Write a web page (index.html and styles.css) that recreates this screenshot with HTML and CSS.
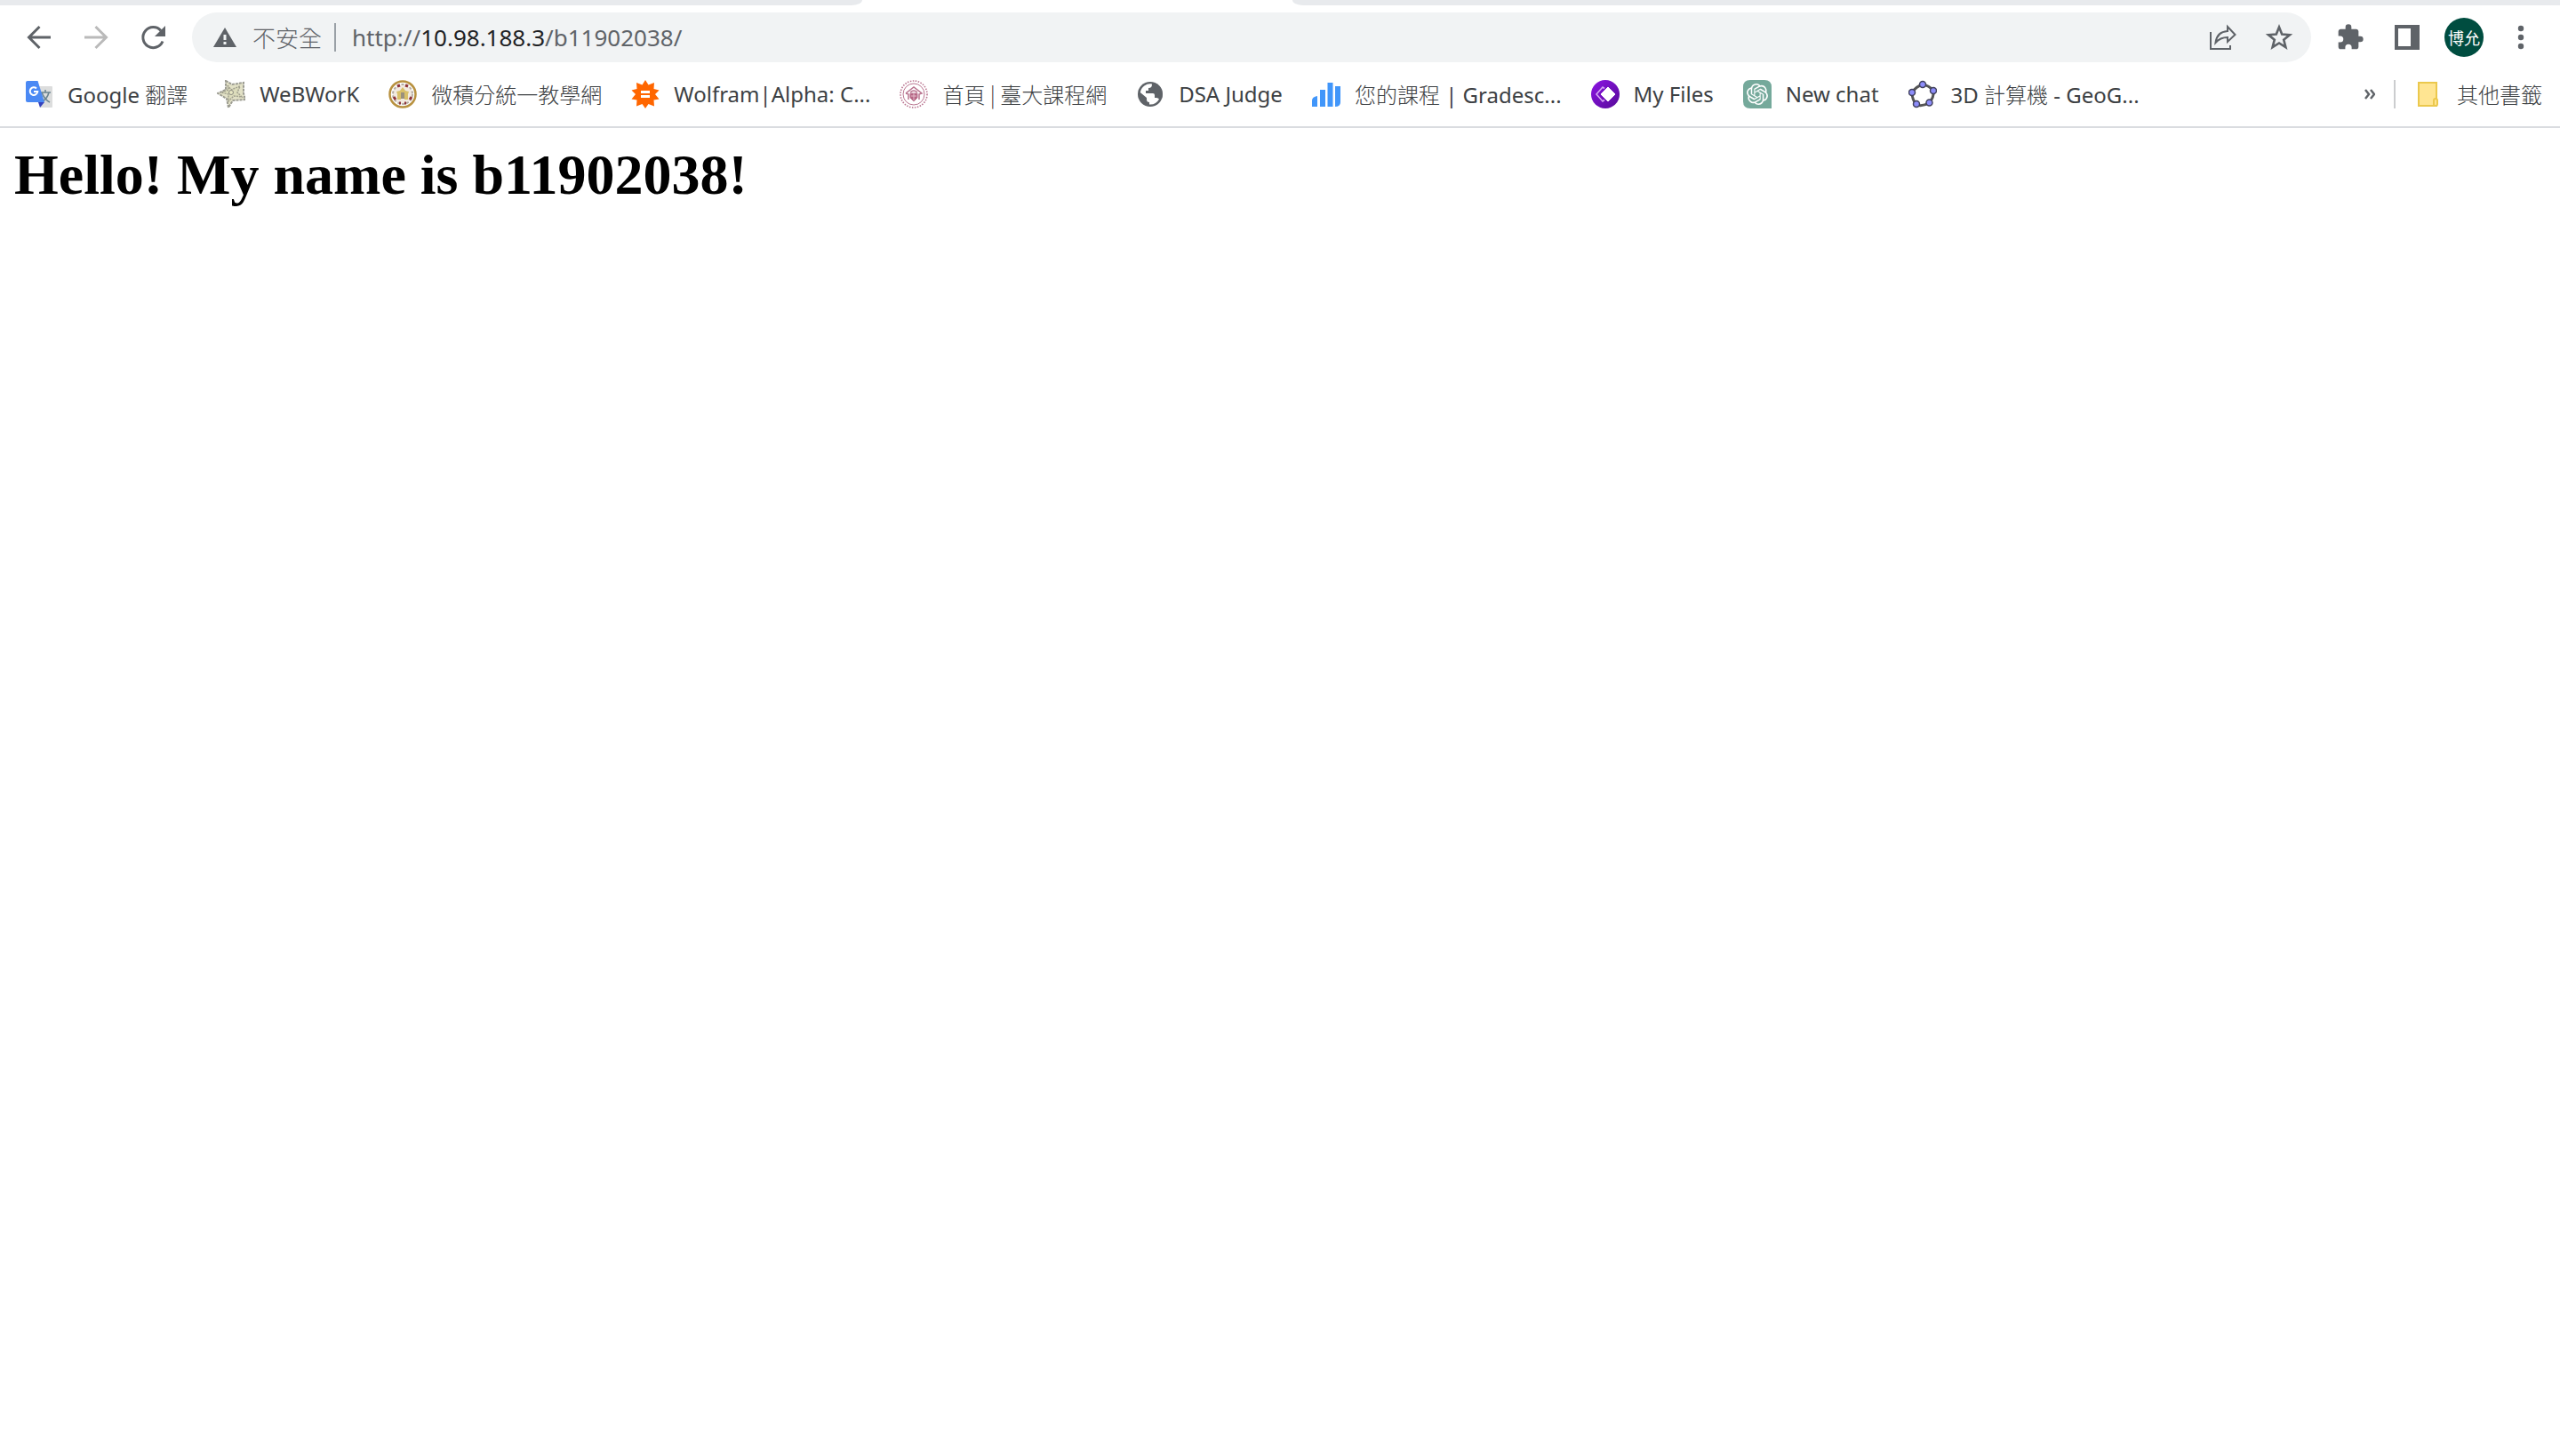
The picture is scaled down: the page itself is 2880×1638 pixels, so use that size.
FILE: index.html
```html
<!DOCTYPE html>
<html lang="zh-Hant">
<head>
<meta charset="utf-8">
<title>b11902038</title>
<link rel="stylesheet" href="styles.css">
</head>
<body>
<header class="browser">
  <div class="tabs"><div class="tabs-before"></div><div class="tabs-active"></div><div class="tabs-after"></div></div>

  <div class="toolbar">
    <button class="tool" aria-label="Back"><svg class="icon" viewBox="0 0 32 32"><path d="M29 16H4M16.500 4 4.500 16l12 12" fill="none" stroke="currentColor" stroke-width="3"/></svg></button>
    <button class="tool" aria-label="Forward" disabled><svg class="icon" viewBox="0 0 32 32"><path d="M3 16h25M15.500 4l12 12-12 12" fill="none" stroke="currentColor" stroke-width="3"/></svg></button>
    <button class="tool" aria-label="Reload"><svg class="icon" viewBox="0 0 32 32"><path d="M27 20.500A11.500 11.500 0 1 1 25 8.500" fill="none" stroke="currentColor" stroke-width="3"/><path d="M30 3v12H18z" fill="currentColor"/></svg></button>

    <div class="omnibox">
      <svg class="warning" viewBox="0 0 26 22"><path d="M13 0 26 22H0z" fill="#5f6368"/><path d="M11.500 8h3v6h-3zM11.500 16h3v3h-3z" fill="#f1f3f4"/></svg>
      <span class="cjk security">不安全</span>
      <span class="url-divider"></span>
      <div class="url" role="textbox" aria-label="Address" contenteditable="true" spellcheck="false">http://<span class="host">10.98.188.3</span>/b11902038/</div>
      <button class="tool" aria-label="Share"><svg class="icon" viewBox="0 0 32 32" fill="none" stroke="currentColor" stroke-width="2"><path d="M3 10v19h22v-4"/><path d="M22 4l8.500 9L22 21v-5c-6 0-10 2-13.500 6C9.500 14 14 9.500 22 9z"/></svg></button>
      <button class="tool" aria-label="Bookmark this page"><svg class="icon" viewBox="0 0 32 32"><path d="M16 4.500l3.200 8.100 8.700.6-6.700 5.500 2.200 8.500L16 22.500l-7.400 4.700 2.200-8.500-6.700-5.500 8.700-.6z" fill="none" stroke="currentColor" stroke-width="2.600"/></svg></button>
    </div>

    <button class="tool" aria-label="Extensions"><svg class="icon" viewBox="0 0 24 24"><path d="M20.500 11H19V7c0-1.100-.9-2-2-2h-4V3.500a2.500 2.500 0 0 0-5 0V5H4c-1.100 0-2 .9-2 2v3.800h1.500a2.700 2.700 0 0 1 0 5.400H2V20c0 1.100.9 2 2 2h3.800v-1.500a2.700 2.700 0 0 1 5.400 0V22H17c1.100 0 2-.9 2-2v-4h1.500a2.500 2.500 0 0 0 0-5z" fill="currentColor"/></svg></button>
    <button class="tool" aria-label="Side panel"><svg class="icon" viewBox="0 0 32 32"><path d="M2 2h28v28H2zM6 6v20h14V6z" fill="currentColor" fill-rule="evenodd"/></svg></button>
    <button class="tool" aria-label="Profile"><span class="avatar">博允</span></button>
    <button class="tool" aria-label="Menu"><svg class="icon" viewBox="0 0 32 32" fill="currentColor"><circle cx="16" cy="6" r="3.200"/><circle cx="16" cy="16" r="3.200"/><circle cx="16" cy="26" r="3.200"/></svg></button>
  </div>

  <nav class="bookmarks">
    <a class="bookmark" href="#"><svg class="icon" viewBox="0 0 32 32"><path d="M12 7h18q1 0 1 1v22q0 1-1 1H17z" fill="#dcdddd"/><path d="M17 14h12M23 11v3M19 14q3 8 9 11M27 14q-2 8-9 11" fill="none" stroke="#6a8490" stroke-width="1.600"/><path d="M15 25h7l-5 6z" fill="#3442bd"/><path d="M3 1h11.500L22 25H3q-2 0-2-2V3q0-2 2-2z" fill="#4a89f4"/><path d="M13 9.500A4.300 4.300 0 1 0 14.300 13H10" fill="none" stroke="#fff" stroke-width="2"/></svg><span>Google <span class="cjk">翻譯</span></span></a>
    <a class="bookmark" href="#"><svg class="icon" viewBox="0 0 32 32"><path d="M10 1l7 4 13-2v12l2 7-14 1-5 8-2-10L1 15l9-4z" fill="#e2e1c6" stroke="#9c9c92" stroke-width="2" stroke-dasharray="3 1"/><path d="M12 6l4 5 10-4-3 7 5 5-9-1-6 6v-8l-8-2 8-3z" fill="#dcdcbb" stroke="#a09f8e" stroke-width="1.500" stroke-dasharray="2 1"/><circle cx="16" cy="14" r="2.500" fill="#e9e8c4" stroke="#8b8b80"/></svg><span>WeBWorK</span></a>
    <a class="bookmark" href="#"><svg class="icon" viewBox="0 0 32 32"><circle cx="16" cy="16" r="14.500" fill="#fff" stroke="#b8913f" stroke-width="2.500"/><circle cx="16" cy="16" r="11" fill="#f2eae0" stroke="#b5aca3" stroke-width="2" stroke-dasharray="3 2"/><path d="M10 7l3-1M22 7l-3-1M6 19l2 3M26 19l-2 3M12 26h2M18 26h2" stroke="#8e333a" stroke-width="3"/><path d="M9 13l4-1 3-4 3 4 4 1-1 3v6h-4v-5h-4v5h-4v-6z" fill="#d9c069"/><path d="M14 14h4v7h-4z" fill="#9a907c"/></svg><span class="cjk">微積分統一教學網</span></a>
    <a class="bookmark" href="#"><svg class="icon" viewBox="0 0 32 32"><path d="M16 0l3.500 5.500L26 3l-.5 7 6 1.500L27 16l4.500 5.500-6 1 .5 7-6.500-2.500L16 32l-3.500-5L6 29.500l.5-7-6-1L5 16 .5 11.500l6-1.500L6 3l6.500 2.500z" fill="#f60"/><path d="M11 12h10v3H11zM11 17h10v3H11z" fill="#fff"/></svg><span>Wolfram|Alpha: C...</span></a>
    <a class="bookmark" href="#"><svg class="icon" viewBox="0 0 32 32" fill="none" stroke="#b9748f"><circle cx="16" cy="16" r="15" stroke-width="1.600" stroke-dasharray="1.500 1.500"/><circle cx="16" cy="16" r="12" stroke-width="1"/><path d="M7 15l9-7 9 7-3 1v6M10 22v-6l-3-1M12 14q4-4 8 0" stroke-width="1.500"/><path d="M12 15h8v5l-4 4-4-4z" fill="#b66685"/><path d="M13 18h6M16 15v8" stroke="#e4bdcb"/></svg><span class="cjk">首頁 | 臺大課程網</span></a>
    <a class="bookmark" href="#"><svg class="icon" viewBox="0 0 32 32"><circle cx="16" cy="16" r="14" fill="#5f6368"/><path d="M18 4.500c0 3-1 4.500-4 4.500v3h-3v3h8q2 0 2 2v3h2q2 0 3 1.500A11.500 11.500 0 0 1 15 27.500V25q-3 0-3-3v-2L4.800 14A11.500 11.500 0 0 1 18 4.500z" fill="#fff"/><path d="M21 3.500v5q0 3-4 3v3h3q4 0 4 4 3 0 5 2.500Q32 8 21 3.500z" fill="#5f6368"/></svg><span>DSA Judge</span></a>
    <a class="bookmark" href="#"><svg class="icon" viewBox="0 0 32 32" fill="#4196fa"><path d="M0 30v-7q0-4 6-5v12zM9 11h6v19H9zM17.500 3h6v27h-6zM26 7h6v18q0 5-6 5z"/></svg><span><span class="cjk">您的課程</span> | Gradesc...</span></a>
    <a class="bookmark" href="#"><svg class="icon" viewBox="0 0 32 32"><defs><linearGradient id="violet" x2="1" y2="1"><stop stop-color="#8c14e4"/><stop offset="1" stop-color="#570b98"/></linearGradient></defs><circle cx="16" cy="16" r="16" fill="url(#violet)"/><path d="M15 9.500l-2-1.500-7 8 7 8 2-1.500" fill="none" stroke="#d7a7f4" stroke-width="1.600"/><path d="M19 8l8 8-8 8-8-8z" fill="#fff" stroke="#fff" stroke-linejoin="round"/></svg><span>My Files</span></a>
    <a class="bookmark" href="#"><svg class="icon" viewBox="0 0 32 32"><path d="M8 0h16q8 0 8 8v24H8q-8 0-8-8V8q0-8 8-8z" fill="#75a99b"/><g transform="translate(4 4)" fill="#fff"><path d="M22.282 9.821a5.985 5.985 0 0 0-.516-4.911 6.046 6.046 0 0 0-6.510-2.900A6.065 6.065 0 0 0 4.981 4.182a5.985 5.985 0 0 0-3.998 2.900 6.046 6.046 0 0 0 .743 7.097 5.980 5.980 0 0 0 .511 4.911 6.051 6.051 0 0 0 6.515 2.900A5.985 5.985 0 0 0 13.260 24a6.056 6.056 0 0 0 5.772-4.206 5.990 5.990 0 0 0 3.998-2.900 6.056 6.056 0 0 0-.748-7.073zM13.260 22.430a4.476 4.476 0 0 1-2.876-1.041l.141-.080 4.779-2.758a.795.795 0 0 0 .392-.681v-6.737l2.020 1.169a.071.071 0 0 1 .038.052v5.583a4.504 4.504 0 0 1-4.494 4.493zM3.600 18.304a4.471 4.471 0 0 1-.535-3.014l.142.085 4.783 2.758a.771.771 0 0 0 .781 0l5.843-3.368v2.332a.080.080 0 0 1-.033.062L9.740 19.950a4.500 4.500 0 0 1-6.140-1.646zM2.341 7.896a4.485 4.485 0 0 1 2.365-1.973v5.677a.766.766 0 0 0 .388.676l5.814 3.355-2.020 1.168a.076.076 0 0 1-.071 0l-4.830-2.786A4.504 4.504 0 0 1 2.341 7.872zm16.597 3.855l-5.833-3.387L15.119 7.200a.076.076 0 0 1 .071 0l4.830 2.791a4.494 4.494 0 0 1-.677 8.105v-5.678a.790.790 0 0 0-.405-.667zm2.011-3.023l-.142-.085-4.774-2.782a.776.776 0 0 0-.785 0L9.409 9.230V6.897a.066.066 0 0 1 .028-.061l4.830-2.787a4.499 4.499 0 0 1 6.681 4.660zM8.307 12.863l-2.020-1.164a.080.080 0 0 1-.038-.057V6.075a4.499 4.499 0 0 1 7.376-3.454l-.142.081L8.704 5.460a.795.795 0 0 0-.392.681zm1.097-2.365l2.602-1.500 2.607 1.500v2.999l-2.597 1.500-2.607-1.500z"/></g></svg><span>New chat</span></a>
    <a class="bookmark" href="#"><svg class="icon" viewBox="0 0 32 32"><path d="M16 5q7 1 12 7 1 8-5 14-7 4-14 2-5-6-5-14 5-7 12-9z" fill="none" stroke="#555" stroke-width="3"/><g fill="#8d8dfa" stroke="#41415c" stroke-width="1.500"><circle cx="16" cy="5" r="3.500"/><circle cx="28" cy="12" r="3.500"/><circle cx="23.500" cy="25.500" r="3.500"/><circle cx="9" cy="27" r="3.500"/><circle cx="4" cy="14" r="3.500"/></g></svg><span>3D <span class="cjk">計算機</span> - GeoG...</span></a>

    <button class="more" aria-label="More bookmarks"><svg class="chevrons" viewBox="0 0 12 12"><path d="M1 1l4 5-4 5M7 1l4 5-4 5" fill="none" stroke="#5f6368" stroke-width="2.500"/></svg></button>
    <span class="bar-divider"></span>
    <a class="bookmark" href="#"><svg class="icon" viewBox="0 0 32 32" fill="#ffe592" stroke="#ebc84d" stroke-width="2"><path d="M5 3h20v26H5z"/><path d="M22 29v-6q0-2 2-2t2 2v4q0 2-2 2z"/></svg><span class="cjk">其他書籤</span></a>
  </nav>
</header>

<main class="page">
  <h1 class="greeting">Hello! My name is b11902038!</h1>
</main>
</body>
</html>
```

FILE: styles.css
```css
body {
  margin: 0;
  background: #fff;
  font-family: "Noto Sans", "Noto Sans CJK TC", sans-serif;
}

.browser {
  border-bottom: 2px solid #dadce0;
}

.tabs {
  display: flex;
  height: 6px;
}

.tabs-before {
  width: 970px;
  background: #e8eaed;
  border-bottom-right-radius: 12px 6px;
}

.tabs-active {
  width: 484px;
}

.tabs-after {
  flex: 1;
  background: #e8eaed;
  border-bottom-left-radius: 12px 6px;
}

.toolbar {
  display: flex;
  align-items: center;
  height: 72px;
  padding: 0 12px;
}

.tool,
.more {
  display: flex;
  flex: none;
  align-items: center;
  justify-content: center;
  width: 64px;
  height: 56px;
  padding: 0;
  border: 0;
  background: none;
  color: #5f6368;
}

.tool:disabled {
  color: #bababa;
}

.icon {
  flex: none;
  width: 32px;
  height: 32px;
}

.omnibox {
  display: flex;
  flex: 1;
  align-items: center;
  height: 56px;
  margin: 0 12px;
  padding: 0 4px 0 24px;
  border-radius: 28px;
  background: #f1f3f4;
  color: #5f6368;
  font-size: 26px;
  line-height: 36px;
}

.warning {
  width: 26px;
  height: 22px;
}

.cjk {
  font-family: "Noto Sans CJK TC", sans-serif;
  font-weight: 300;
}

.security {
  margin-left: 18px;
}

.url-divider {
  width: 2px;
  height: 32px;
  margin: 0 18px 0 14px;
  background: #9aa0a6;
}

.url {
  flex: 1;
  outline: 0;
}

.host {
  color: #202124;
}

.avatar {
  width: 44px;
  border-radius: 50%;
  background: #004d40;
  color: #fff;
  font-family: "Noto Sans CJK TC", sans-serif;
  font-size: 18px;
  line-height: 44px;
}

.bookmarks {
  display: flex;
  align-items: center;
  height: 56px;
  padding: 0 20px 8px 28px;
  gap: 33px;
}

.bookmark {
  display: flex;
  flex: none;
  align-items: center;
  gap: 16px;
  color: #3c4043;
  font-size: 24px;
  line-height: 32px;
  text-decoration: none;
  white-space: nowrap;
}

.more {
  width: 24px;
  margin-left: auto;
}

.chevrons {
  width: 12px;
  height: 12px;
}

.bar-divider {
  width: 2px;
  height: 32px;
  margin: 0 -12px 0 -18px;
  background: #cccdcf;
}

.page {
  padding: 16px;
}

.greeting {
  margin: 0;
  color: #000;
  font: bold 64px/74px "Liberation Serif", serif;
}
```
